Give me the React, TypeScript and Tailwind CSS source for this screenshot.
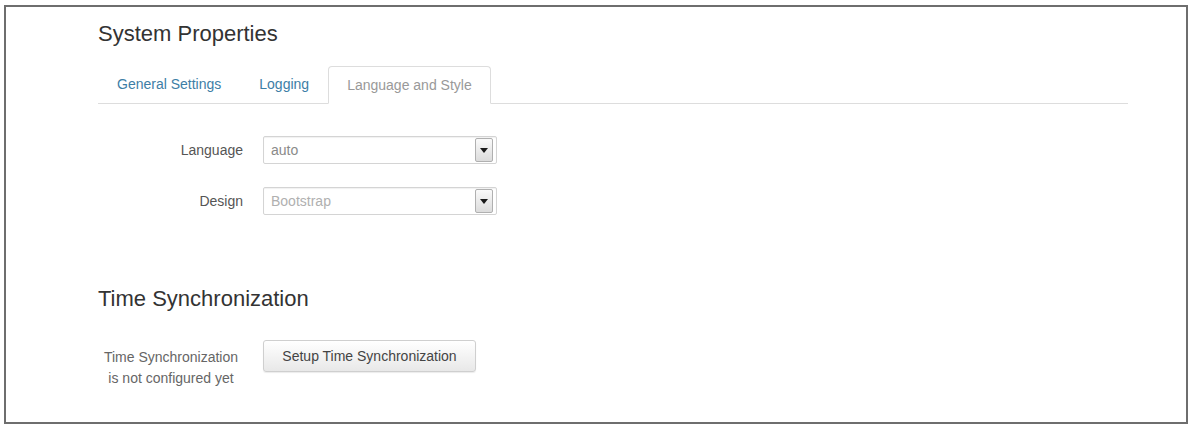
import React from "react";

const font = { fontFamily: '"Liberation Sans", Arial, sans-serif' };

function SelectBox({ value, muted }: { value: string; muted?: boolean }) {
  return (
    <div className="flex h-[28px] w-[234px] items-center justify-between rounded-[2px] border border-[#d4d4d4] bg-white pl-[7px] pr-[3px] shadow-[inset_0_1px_1px_rgba(0,0,0,0.06)]">
      <span className={`text-[14px] ${muted ? "text-[#b0b0b0]" : "text-[#8a8a8a]"}`}>{value}</span>
      <span className="flex h-[24px] w-[18px] items-center justify-center rounded-[2px] border border-[#b0b0b0] bg-gradient-to-b from-[#fafafa] to-[#dcdcdc]">
        <svg width="8" height="5" viewBox="0 0 8 5">
          <path d="M0 0 L8 0 L4 5 Z" fill="#1a1a1a" />
        </svg>
      </span>
    </div>
  );
}

export default function App() {
  return (
    <div className="h-[426px] w-[1190px] overflow-hidden bg-white pt-[5px] pl-[4px]" style={font}>
      <div className="h-[419px] w-[1184px] border-2 border-[#6e6e6e] pt-[14px] pl-[92px] pr-[58px]">
        <h3 className="text-[22px] leading-[26px] text-[#333]">System Properties</h3>

        <div className="mt-[19px] flex border-b border-[#dddddd] text-[14px]">
          <div className="px-[19px] py-[10px] leading-[16px] text-[#3d7ea6]">General Settings</div>
          <div className="px-[19px] py-[10px] leading-[16px] text-[#3d7ea6]">Logging</div>
          <div className="-mb-px rounded-t-[4px] border border-[#dddddd] border-b-white bg-white px-[18px] py-[10px] leading-[16px] text-[#999]">
            Language and Style
          </div>
        </div>

        <div className="mt-[32px] flex items-center text-[14px] text-[#555]">
          <div className="w-[146px] pr-[1px] text-right">Language</div>
          <div className="ml-[19px]">
            <SelectBox value="auto" />
          </div>
        </div>
        <div className="mt-[23px] flex items-center text-[14px] text-[#555]">
          <div className="w-[146px] pr-[1px] text-right">Design</div>
          <div className="ml-[19px]">
            <SelectBox value="Bootstrap" muted />
          </div>
        </div>

        <h3 className="mt-[71px] text-[22px] leading-[26px] text-[#333]">Time Synchronization</h3>

        <div className="mt-[28px] flex items-start">
          <div className="mt-[7px] w-[146px] text-center text-[14px] leading-[21px] text-[#666]">
            Time Synchronization
            <br />
            is not configured yet
          </div>
          <button className="ml-[19px] h-[32px] w-[213px] rounded-[3px] border border-[#cfcfcf] bg-gradient-to-b from-white to-[#e8e8e8] text-[14px] text-[#444] shadow-[0_1px_1px_rgba(0,0,0,0.08)]">
            Setup Time Synchronization
          </button>
        </div>
      </div>
    </div>
  );
}
